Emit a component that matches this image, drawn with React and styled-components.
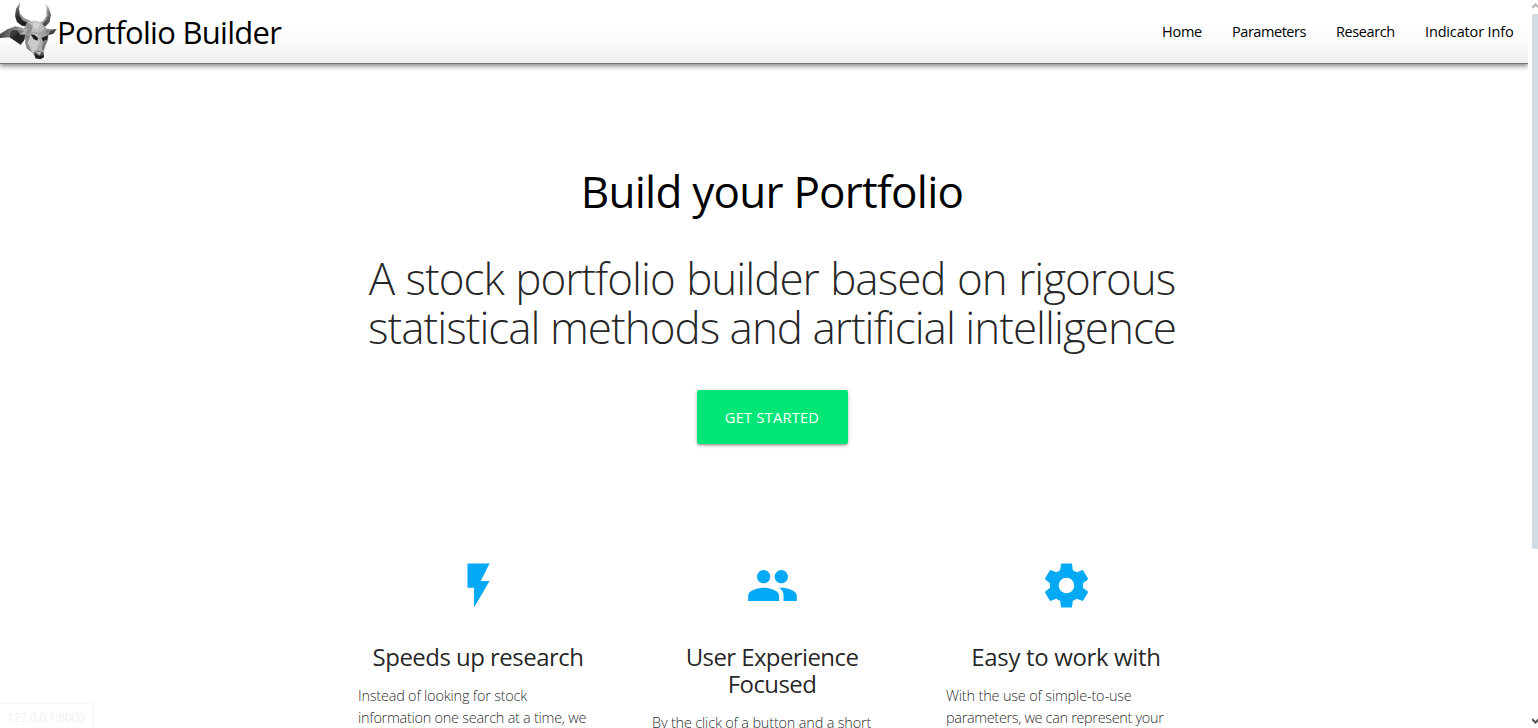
import React from "react";
import styled, { createGlobalStyle } from "styled-components";

const GlobalStyle = createGlobalStyle`
  *, *::before, *::after { box-sizing: border-box; }
  html, body { margin: 0; height: 100%; overflow: hidden; background: #fff; }
  body {
    font-family: "Segoe UI", "Open Sans", "Noto Sans", sans-serif;
    font-size: 15px;
    line-height: 1.5;
    color: rgba(0, 0, 0, 0.87);
  }
  h1, h2, h3, p { margin: 0; }
`;

const Viewport = styled.div`
  position: relative;
  display: flex;
  height: 728px;
  overflow: hidden;
`;

const Page = styled.div`
  flex: 0 0 1528px;
  height: 728px;
  overflow: hidden;
`;

const NavBar = styled.nav`
  display: flex;
  justify-content: space-between;
  height: 64px;
  background: linear-gradient(#fff 40%, #fbfbfb 65%, #eeeeee);
  border-bottom: 1px solid #707070;
  box-shadow: 0 2px 5px rgba(0, 0, 0, 0.5);
`;

const Brand = styled.a`
  display: flex;
  align-items: flex-start;
  color: #000;
  font-size: 31px;
  font-weight: 400;
  line-height: 64px;
  letter-spacing: -0.7px;
  white-space: nowrap;
`;

const Logo = styled.svg`
  flex: none;
  width: 57px;
  height: 60px;
`;

const NavLinks = styled.div`
  display: flex;
  gap: 30px;
  padding-right: 14px;
`;

const NavLink = styled.a`
  width: ${(p) => p.$width}px;
  color: #000;
  font-size: 14.5px;
  font-weight: 400;
  line-height: 63px;
  letter-spacing: ${(p) => p.$tracking}px;
  white-space: nowrap;
`;

const Hero = styled.section`
  display: flex;
  flex-direction: column;
  align-items: center;
  width: 860px;
  margin-left: 342px;
  padding-top: 102px;
  text-align: center;
`;

const Title = styled.h1`
  color: #000;
  font-size: 44px;
  font-weight: 400;
  line-height: 50px;
  letter-spacing: -0.75px;
  white-space: nowrap;
`;

const Tagline = styled.h2`
  margin-top: 38px;
  font-size: 44px;
  font-weight: 300;
  line-height: 49px;
  white-space: nowrap;
`;

const TaglineRow = styled.span`
  display: block;
  letter-spacing: ${(p) => p.$tracking}px;
  word-spacing: ${(p) => p.$wordGap || 0}px;
`;

const ActionButton = styled.button`
  width: 151px;
  height: 54px;
  margin-top: 38px;
  padding: 1px 0 0;
  border: 0;
  border-radius: 2px;
  background: #00e676;
  box-shadow: 0 2px 2px rgba(0, 0, 0, 0.14), 0 3px 1px -2px rgba(0, 0, 0, 0.12), 0 1px 5px rgba(0, 0, 0, 0.2);
  color: #fff;
  font: 400 14.5px/53px "Segoe UI", "Open Sans", sans-serif;
  letter-spacing: 0.3px;
`;

const Features = styled.section`
  display: grid;
  grid-template-columns: repeat(3, 240px);
  column-gap: 54px;
  margin: 115px 0 0 358px;
`;

const Feature = styled.article`
  display: flex;
  flex-direction: column;
  align-items: center;
`;

const FeatureIcon = styled.svg`
  width: 53px;
  height: 53px;
  fill: #03a9f4;
`;

const FeatureTitle = styled.h3`
  margin-top: 31px;
  font-size: 24px;
  font-weight: 400;
  line-height: 27px;
  letter-spacing: ${(p) => p.$tracking}px;
  text-align: center;
  white-space: nowrap;
`;

const FeatureText = styled.p`
  align-self: flex-start;
  margin-top: 15px;
  font-size: 14.5px;
  font-weight: 300;
  line-height: 22px;
  white-space: nowrap;
`;

const TextRow = styled.span`
  display: block;
  letter-spacing: ${(p) => p.$tracking}px;
`;

const ScrollTrack = styled.aside`
  display: flex;
  flex-direction: column;
  align-items: flex-end;
  justify-content: space-between;
  flex: 0 0 10px;
  height: 728px;
  padding: 2px 0 3px;
`;

const ScrollThumb = styled.div`
  width: 6px;
  height: 535px;
  margin: 4px 0 auto;
  border-radius: 2px 0 0 2px;
  background: #d0dbe4;
`;

const ScrollArrow = styled.svg`
  width: 6px;
  height: 8px;
  fill: none;
  stroke-width: 2;
`;

const StatusBubble = styled.div`
  position: absolute;
  left: 0;
  bottom: 0;
  width: 94px;
  height: 25px;
  padding-left: 7px;
  border: solid #f6f6f6;
  border-width: 1px 1px 0 0;
  background: #fff;
  color: #efefef;
  font-size: 12px;
  line-height: 28px;
  letter-spacing: -0.25px;
`;

const BullLogo = () => (
  <Logo viewBox="0 0 171 180">
    <defs>
      <linearGradient id="hornLeft" x1="0" y1="0" x2="0.3" y2="1">
        <stop offset="0" stopColor="#eee" />
        <stop offset="0.3" stopColor="#666" />
        <stop offset="0.6" stopColor="#2c2c2c" />
        <stop offset="1" stopColor="#1c1c1c" />
      </linearGradient>
      <linearGradient id="hornRight" x1="0" y1="0" x2="0" y2="1">
        <stop offset="0" stopColor="#eee" />
        <stop offset="0.4" stopColor="#777" />
        <stop offset="1" stopColor="#3c3c3c" />
      </linearGradient>
      <linearGradient id="neck" x1="0" y1="0" x2="1" y2="0">
        <stop offset="0" stopColor="#444" />
        <stop offset="0.45" stopColor="#7c7c7c" />
        <stop offset="1" stopColor="#a0a0a0" />
      </linearGradient>
    </defs>
    <path fill="url(#neck)" d="M0 102 22 88 46 79 68 84 86 96 84 115 72 121 62 134 30 112 0 114Z" />
    <path fill="#252525" d="M34 92 56 90 76 103 72 121 62 134 29 112Z" />
    <path fill="#3c3c3c" d="M34 92 56 90 46 106 29 112Z" />
    <path fill="url(#hornLeft)" d="M61 5 57 26 60 42 72 55 92 64 86 80 66 77 51 66 45 48 48 26Z" />
    <path fill="#999" d="M58 30 61 43 72 55 92 64 88 71 68 61 58 46Z" />
    <path fill="url(#hornRight)" d="M135 8 147 24 153 44 149 66 138 78 124 83 116 70 131 62 140 47 140 27Z" />
    <path fill="#a0a0a0" d="M140 27 145 44 138 61 124 75 116 70 131 62 140 47Z" />
    <path fill="#a2a2a2" d="M82 66 104 62 124 68 139 85 151 90 170 87 160 101 146 105 144 120 136 139 131 156 132 171 122 177 107 175 98 159 81 146 76 130 78 105 60 103 50 88 70 89Z" />
    <path fill="#bdbdbd" d="M82 66 104 62 124 68 134 88 117 98 94 95 76 91Z" />
    <path fill="#8f8f8f" d="M82 66 98 78 92 98 77 105 76 89Z" />
    <path fill="#d2d2d2" d="M101 64 121 70 112 90 98 79Z" />
    <path fill="#b0b0b0" d="M50 88 74 88 84 84 77 101 62 104Z" />
    <path fill="#777" d="M50 88 72 93 60 103Z" />
    <path fill="#888" d="M139 88 170 87 153 96 144 106 134 100Z" />
    <path fill="#444" d="M150 94 170 87 160 101 146 105Z" />
    <path fill="#8a8a8a" d="M78 105 93 109 84 128 95 155 81 146 76 130Z" />
    <path fill="#cacaca" d="M94 100 112 103 120 122 112 146 98 158 83 128Z" />
    <path fill="#adadad" d="M112 103 135 109 130 133 130 156 114 158 112 146 120 122Z" />
    <path fill="#1c1c1c" d="M92 103 103 104 114 113 113 122 101 118Z" />
    <path fill="#222" d="M124 113 144 106 142 119 129 124Z" />
    <path fill="#777" d="M130 124 143 119 134 139 130 154 125 146Z" />
    <path fill="#555" d="M102 158 116 154 130 157 132 171 121 177 107 175Z" />
    <path fill="#1c1c1c" d="M103 162 112 165 119 169 131 164 131 172 122 177 107 175Z" />
    <path fill="#c4c4c4" d="M108 156 124 156 118 166Z" />
  </Logo>
);

const links = [
  { label: "Home", width: 40, tracking: -0.25 },
  { label: "Parameters", width: 74, tracking: -0.45 },
  { label: "Research", width: 59, tracking: -0.4 },
  { label: "Indicator Info", width: 89, tracking: -0.15 },
];

const features = [
  {
    icon: "M7 2v11h3v9l7-12h-4l4-8z",
    title: ["Speeds up research"],
    titleTracking: -0.53,
    text: [
      { row: "Instead of looking for stock", tracking: -0.22 },
      { row: "information one search at a time, we", tracking: -0.27 },
    ],
  },
  {
    icon: "M16 11c1.66 0 2.99-1.34 2.99-3S17.66 5 16 5c-1.66 0-3 1.34-3 3s1.34 3 3 3zm-8 0c1.66 0 2.99-1.34 2.99-3S9.66 5 8 5C6.34 5 5 6.34 5 8s1.34 3 3 3zm0 2c-2.33 0-7 1.17-7 3.5V19h14v-2.5c0-2.33-4.67-3.5-7-3.5zm8 0c-.29 0-.62.02-.97.05 1.16.84 1.97 1.97 1.97 3.45V19h6v-2.5c0-2.33-4.67-3.5-7-3.5z",
    title: ["User Experience", "Focused"],
    titleTracking: -0.6,
    text: [{ row: "By the click of a button and a short", tracking: -0.19 }],
  },
  {
    icon: "M19.43 12.98c.04-.32.07-.64.07-.98s-.03-.66-.07-.98l2.11-1.65c.19-.15.24-.42.12-.64l-2-3.46c-.12-.22-.39-.3-.61-.22l-2.49 1c-.52-.4-1.08-.73-1.69-.98l-.38-2.65C14.46 2.18 14.25 2 14 2h-4c-.25 0-.46.18-.49.42l-.38 2.65c-.61.25-1.17.59-1.69.98l-2.49-1c-.23-.09-.49 0-.61.22l-2 3.46c-.13.22-.07.49.12.64l2.11 1.65c-.04.32-.07.65-.07.98s.03.66.07.98l-2.11 1.65c-.19.15-.24.42-.12.64l2 3.46c.12.22.39.3.61.22l2.49-1c.52.4 1.08.73 1.69.98l.38 2.65c.03.24.24.42.49.42h4c.25 0 .46-.18.49-.42l.38-2.65c.61-.25 1.17-.59 1.69-.98l2.49 1c.23.09.49 0 .61-.22l2-3.46c.12-.22.07-.49-.12-.64l-2.11-1.65zM12 15.5c-1.93 0-3.5-1.57-3.5-3.5s1.57-3.5 3.5-3.5 3.5 1.57 3.5 3.5-1.57 3.5-3.5 3.5z",
    title: ["Easy to work with"],
    titleTracking: -0.35,
    text: [
      { row: "With the use of simple-to-use", tracking: -0.18 },
      { row: "parameters, we can represent your", tracking: -0.34 },
    ],
  },
];

const Lines = ({ rows }) =>
  rows.map((row, i) => (
    <React.Fragment key={row}>
      {i > 0 && <br />}
      {row}
    </React.Fragment>
  ));

export default function App() {
  return (
    <Viewport>
      <GlobalStyle />
      <Page>
        <NavBar>
          <Brand>
            <BullLogo />
            Portfolio Builder
          </Brand>
          <NavLinks>
            {links.map((l) => (
              <NavLink key={l.label} $width={l.width} $tracking={l.tracking}>{l.label}</NavLink>
            ))}
          </NavLinks>
        </NavBar>
        <Hero>
          <Title>Build your Portfolio</Title>
          <Tagline>
            <TaglineRow $tracking={-1} $wordGap={1}>A stock portfolio builder based on rigorous</TaglineRow>
            <TaglineRow $tracking={-1}>statistical methods and artificial intelligence</TaglineRow>
          </Tagline>
          <ActionButton>GET STARTED</ActionButton>
        </Hero>
        <Features>
          {features.map((f) => (
            <Feature key={f.title[0]}>
              <FeatureIcon viewBox="0 0 24 24"><path d={f.icon} /></FeatureIcon>
              <FeatureTitle $tracking={f.titleTracking}><Lines rows={f.title} /></FeatureTitle>
              <FeatureText>
                {f.text.map((t) => (
                  <TextRow key={t.row} $tracking={t.tracking}>{t.row}</TextRow>
                ))}
              </FeatureText>
            </Feature>
          ))}
        </Features>
      </Page>
      <ScrollTrack>
        <ScrollArrow viewBox="0 0 6 8" stroke="#b5b5b5"><path d="M0 6 3.5 2.5 7 6" /></ScrollArrow>
        <ScrollThumb />
        <ScrollArrow viewBox="0 0 6 8" stroke="#555"><path d="M0 2 3.5 5.5 7 2" /></ScrollArrow>
      </ScrollTrack>
      <StatusBubble>127.0.0.1:8000</StatusBubble>
    </Viewport>
  );
}
